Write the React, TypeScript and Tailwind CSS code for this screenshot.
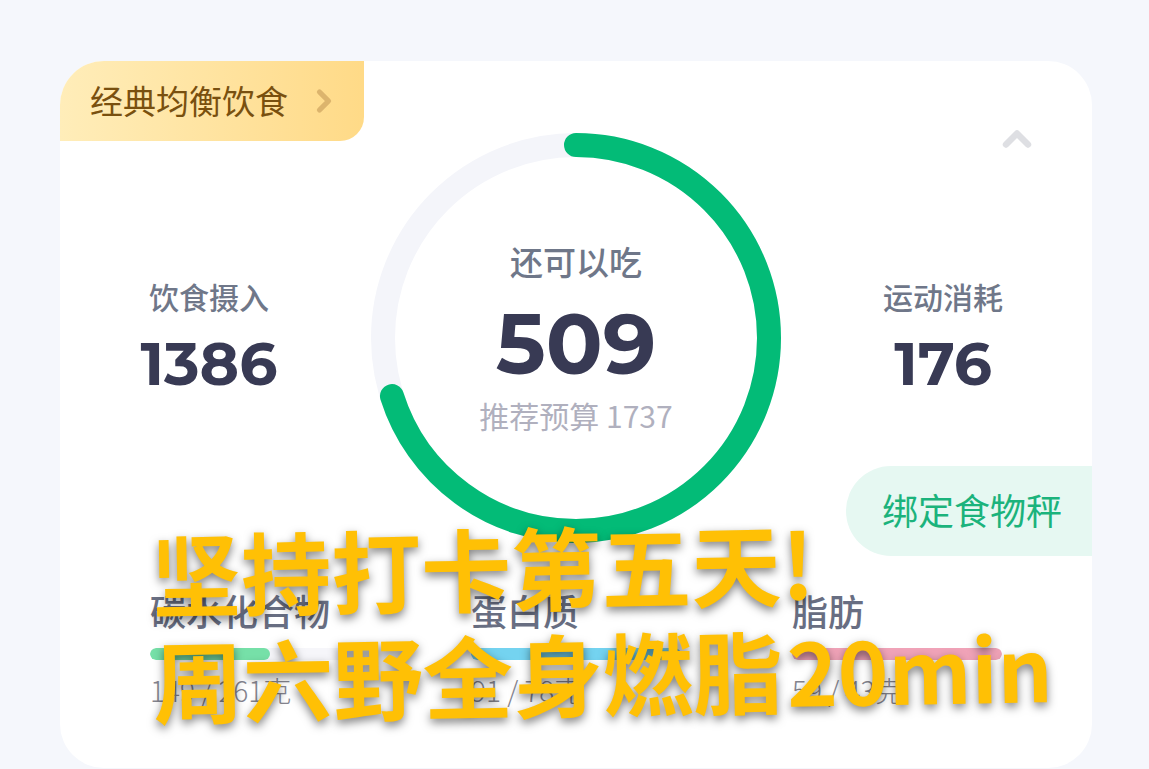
import React from "react";
import { ChevronRight, ChevronUp } from "lucide-react";

const MACROS = [
  { id: "carb", name: "碳水化合物", eaten: 149, goal: 261, bar: "bg-[#76e0a8]" },
  { id: "protein", name: "蛋白质", eaten: 91, goal: 78, bar: "bg-[#74d3f0]" },
  { id: "fat", name: "脂肪", eaten: 59, goal: 43, bar: "bg-[#f0a3b8]" },
];

const RADIUS = 193;
const CIRCUMFERENCE = 2 * Math.PI * RADIUS;

function BudgetRing({ progress, children }: { progress: number; children: React.ReactNode }) {
  return (
    <div className="grid size-[410px] shrink-0 place-items-center">
      <svg viewBox="0 0 410 410" className="col-start-1 row-start-1 size-full -rotate-90" aria-hidden="true">
        <circle cx="205" cy="205" r={RADIUS} fill="none" stroke="#f4f5fa" strokeWidth="24" />
        <circle
          cx="205"
          cy="205"
          r={RADIUS}
          fill="none"
          stroke="#03bb77"
          strokeWidth="24"
          strokeLinecap="round"
          strokeDasharray={`${CIRCUMFERENCE * progress} ${CIRCUMFERENCE}`}
        />
      </svg>
      <div className="col-start-1 row-start-1 flex flex-col items-center">{children}</div>
    </div>
  );
}

function Stat({ label, value }: { label: string; value: number }) {
  return (
    <div className="flex flex-1 flex-col items-center pt-3">
      <span className="text-[30px] leading-10 font-medium text-[#6f7789]">{label}</span>
      <span className="font-[Montserrat,Inter,sans-serif] text-[60px] leading-[96px] font-bold text-[#383a54]">{value}</span>
    </div>
  );
}

export default function App() {
  return (
    <div className="relative min-h-screen overflow-hidden bg-[#f5f7fc] pt-[61px] pr-[57px] pl-[60px] font-['Noto_Sans_CJK_SC',sans-serif]">
      <main className="overflow-hidden rounded-[44px] bg-white">
        <header className="flex h-[72px] items-start justify-between">
          <button className="flex h-20 shrink-0 items-center gap-[18px] rounded-br-3xl bg-linear-to-r from-[#ffedb9] to-[#ffda87] pr-[22px] pl-[30px] text-[33px] text-[#79500f]">
            经典均衡饮食
            <ChevronRight className="size-9 text-[#dcb46d]" strokeWidth={3.5} />
          </button>
          <button aria-label="收起" className="mt-14 mr-[53px] text-[#dedfe3]">
            <ChevronUp className="size-11" strokeWidth={3.5} />
          </button>
        </header>

        <section className="flex items-center px-[3px]">
          <div className="flex flex-1 pr-4">
            <Stat label="饮食摄入" value={1386} />
          </div>
          <BudgetRing progress={0.701}>
            <span className="text-[33px] leading-10 font-medium text-[#6f7789]">还可以吃</span>
            <span className="font-[Montserrat,Inter,sans-serif] text-[84px] leading-[126px] font-bold text-[#383a54]">509</span>
            <span className="-mt-3 text-[30px] leading-10 text-[#b0b0be]">推荐预算 1737</span>
          </BudgetRing>
          <div className="flex flex-1 pl-4">
            <Stat label="运动消耗" value={176} />
          </div>
        </section>

        <div className="-mt-[77px] flex justify-end">
          <button className="h-[90px] rounded-l-full bg-[#e6f8f2] pr-[30px] pb-1 pl-9 text-[36px] text-[#1bb37c]">
            绑定食物秤
          </button>
        </div>

        <section className="grid grid-cols-3 gap-x-[111px] px-[90px] pt-7 pb-[58px]">
          {MACROS.map((macro) => (
            <div key={macro.id}>
              <h2 id={macro.id} className="text-[36px] leading-[52px] font-medium whitespace-nowrap text-[#686e82]">{macro.name}</h2>
              <div
                role="progressbar"
                aria-labelledby={macro.id}
                aria-valuenow={macro.eaten}
                aria-valuemax={macro.goal}
                className="mt-3 h-3 overflow-hidden rounded-full bg-[#f6f6fa]"
              >
                <div
                  className={`h-full rounded-full ${macro.bar}`}
                  style={{ width: `${Math.min(100, (macro.eaten / macro.goal) * 100)}%` }}
                />
              </div>
              <p className="mt-[10px] text-[28px] leading-10 font-light whitespace-nowrap text-[#85858f]">
                {macro.eaten} / {macro.goal}克
              </p>
            </div>
          ))}
        </section>
      </main>

      <p className="pointer-events-none absolute top-[511px] left-[152px] -rotate-1 text-[90px] leading-[107px] font-bold whitespace-nowrap text-[#ffc005] text-shadow-[0_4px_10px_rgb(0_0_0/0.5)]">
        坚持打卡第五天!
        <br />
        周六野全身燃脂<span className="pl-1 text-[86px]">20min</span>
      </p>
    </div>
  );
}
